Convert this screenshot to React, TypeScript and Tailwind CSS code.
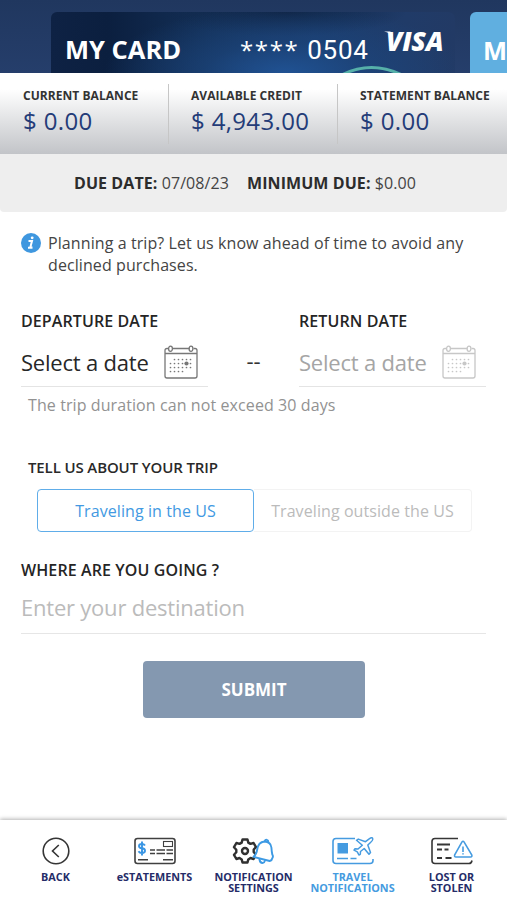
import type { ReactNode } from "react";

function Balance({ label, value, className }: { label: string; value: string; className: string }) {
  return (
    <div className={`h-[60px] shrink-0 whitespace-nowrap ${className}`}>
      <div className="pt-[3px] text-[12px] leading-[18px] font-bold tracking-[0.050px] text-[#333]">{label}</div>
      <div className="text-[24px] leading-[32px] tracking-[0.350px] text-[#243c78]">{value}</div>
    </div>
  );
}

const rows = [
  { y: 14.5, xs: [10, 14, 18, 22, 26] },
  { y: 18.5, xs: [6, 10, 14, 18, 22, 26] },
  { y: 22.5, xs: [6, 10, 14, 18, 22, 26] },
  { y: 26.5, xs: [6, 10, 14, 18] },
];

function CalendarIcon({ color }: { color: string }) {
  return (
    <svg className="mb-[2px]" width="34" height="34" viewBox="0 0 34 34" fill="none" stroke={color} strokeWidth="1.3">
      <path d="M4.500 3.500H3Q1 3.500 1 5.500V31Q1 33 3 33H31Q33 33 33 31V5.500Q33 3.500 31 3.500H29.500M8.500 3.500H25.500M1 8.500H33" />
      <ellipse cx="6.500" cy="3.700" rx="1.900" ry="2.600" />
      <ellipse cx="27" cy="3.700" rx="1.900" ry="2.600" />
      {rows.map((r) => r.xs.map((x) => <circle key={`${x}-${r.y}`} cx={x + 0.5} cy={r.y} r="0.85" fill={color} stroke="none" />))}
      <circle cx="22.500" cy="18.500" r="2.100" fill={color} stroke="none" />
    </svg>
  );
}

function DateField({ label, color, text }: { label: string; color: string; text: string }) {
  return (
    <div className="w-[187px]">
      <div className="text-[16px] leading-[22px] font-semibold tracking-[0.100px] text-[#252525]">{label}</div>
      <div className="mt-[7px] flex h-[48px] items-center justify-between border-b border-[#e4e4e4] pr-[10px]">
        <span className={`pb-[2px] text-[22px] leading-[30px] tracking-[-0.200px] whitespace-nowrap ${text}`}>Select a date</span>
        <CalendarIcon color={color} />
      </div>
    </div>
  );
}

function NavItem({ icon, lines, className = "text-[#252c68]" }: { icon: ReactNode; lines: string[]; className?: string }) {
  return (
    <div className={`flex w-[99px] shrink-0 flex-col items-center ${className}`}>
      <div className="flex h-[30px] items-center">{icon}</div>
      <div className="mt-[5px] text-center text-[10.800px] leading-[11px] font-bold whitespace-nowrap">
        {lines.map((l) => (
          <div key={l}>{l}</div>
        ))}
      </div>
    </div>
  );
}

function BackIcon() {
  return (
    <svg width="28" height="28" viewBox="0 0 28 28" fill="none" stroke="#353535" strokeWidth="1.600">
      <circle cx="14" cy="14" r="12.800" />
      <path d="M16.800 8L10.500 14L16.800 20" />
    </svg>
  );
}

function StatementIcon() {
  return (
    <svg width="42" height="28" viewBox="0 0 42 28" fill="none" stroke="#404040" strokeWidth="1.600">
      <rect x="1" y="1.500" width="40" height="25" rx="2.500" />
      <rect x="29.500" y="4.500" width="9" height="5" strokeWidth="1.100" />
      <path d="M16 13H21M22.500 13H31M32.500 13H39M16 16.500H21M22.500 16.500H31M32.500 16.500H39M4 22.800H14M29 22.800H39" />
      <path d="M11 8.500Q10 7 7.800 7Q5 7 5 9Q5 11 8 11.300Q11 11.600 11 13.800Q11 16 8 16Q5.500 16 4.500 14.300M8 4.500V18.500" stroke="#3995e3" strokeWidth="1.900" />
    </svg>
  );
}

function SettingsIcon() {
  return (
    <svg className="mr-[2px]" width="42" height="28" viewBox="0 0 42 28" fill="none" strokeLinejoin="round" strokeLinecap="round">
      <path d="M10.500 2.500H15.500L16.300 5.600L18.500 6.900L21.600 6L24 10.200L21.700 12.500V15L24 17.800L21.600 22L18.500 21L16.300 22.400L15.500 25.500H10.500L9.700 22.400L7.500 21L4.400 22L2 17.800L4.300 15.300V12.700L2 10.200L4.400 6L7.500 6.900L9.700 5.600Z" stroke="#303030" strokeWidth="2.400" />
      <circle cx="13" cy="14" r="3" stroke="#303030" strokeWidth="2.400" />
      <path d="M21.500 19.800Q24.500 17.500 25.200 12.500Q26.200 5.200 32.500 4.500Q38.800 4.800 39.400 10.500Q39.700 15 40.300 17.500Q41.500 19.500 40.400 21Q40 23.500 37.700 24Z" fill="#fff" stroke="#3d9ae4" strokeWidth="1.900" />
      <path d="M32.800 4A1.800 1.800 0 0 1 36.300 4.700M27.500 22.500Q28 26 30.500 26Q32.500 25.800 33 23.600" stroke="#3d9ae4" strokeWidth="1.900" />
    </svg>
  );
}

function TravelIcon() {
  return (
    <svg width="42" height="28" viewBox="0 0 42 28" fill="none" stroke="#459be0" strokeWidth="1.600">
      <path d="M23 1.500H4Q1 1.500 1 4.500V23.500Q1 26.500 4 26.500H38Q41 26.500 41 23.500V22" />
      <rect x="5.500" y="6" width="10.500" height="10.500" fill="#459be0" stroke="none" />
      <path d="M5 21.500H16M18.500 21.500H24.500" />
      <path d="M24.500 3.300L26.300 2.100L33.500 4.700L37.200 1.900Q40.200 0 40.700 1.500Q41.400 3 38.500 5.500L35.800 8L38.500 15.500L37 17.300L32.200 11.500L28.500 14.500L28.300 17.300L26.900 18L25.300 14.800L22 13.200L23 11.800L26 12L30.300 8.200Z" strokeWidth="1.500" strokeLinejoin="round" />
    </svg>
  );
}

function LostIcon() {
  return (
    <svg width="42" height="28" viewBox="0 0 42 28" fill="none" stroke="#363636" strokeWidth="1.600">
      <path d="M27 1.500H4Q1 1.500 1 4.500V23.500Q1 26.500 4 26.500H38Q40.500 26.500 41 23.500" />
      <path d="M6 7.500H19M6 12.500H11M13.500 12.500H17.500M6 21H11M14.500 21H20.500" strokeWidth="2.100" />
      <path d="M31 4.900Q32 3.500 33 4.900L40.700 17.800Q41.500 19.800 39.500 20H25Q23 19.800 23.700 17.800Z" stroke="#459be0" fill="#fff" />
      <path d="M32 9.500V15M32 16.300V17.500" stroke="#459be0" />
    </svg>
  );
}

export default function App() {
  return (
    <div className="flex h-[900px] w-[507px] flex-col overflow-hidden bg-white font-['Open_Sans',sans-serif]">
      <header className="flex h-[73px] shrink-0 gap-[15px] overflow-hidden bg-linear-to-b from-[#20375f] to-[#253e6b] pt-[12px] pl-[51px]">
        <div className="relative flex h-[61px] w-[404px] shrink-0 overflow-hidden rounded-t-[6px] bg-[radial-gradient(ellipse_45%_110%_at_58%_100%,#205293_0%,#1d488199_45%,transparent_100%),radial-gradient(ellipse_30%_40%_at_58%_0%,#0f2444_0%,transparent_100%),linear-gradient(90deg,#0e2244_0%,#0b1f3f_14%,#132f56_38%,#1a3a69_65%,#203b68_88%,#223a65_100%)] pl-[14px] text-white">
          <span className="mt-[20px] w-[175px] text-[25.500px] leading-[34px] font-bold whitespace-nowrap">MY CARD</span>
          <span className="mt-[21px] flex w-[143px] gap-[8px] leading-[34px] whitespace-nowrap">
            <span className="text-[24px] tracking-[1.600px]">****</span>
            <span className="font-['Roboto',sans-serif] text-[26px] tracking-[0.700px]">0504</span>
          </span>
          <span className="relative mt-[11px] ml-[3px] text-[26.500px] leading-[36px] font-extrabold tracking-[-0.200px] italic">
            VISA
            <svg className="absolute top-[8px] left-[-2px]" width="9" height="5" viewBox="0 0 9 5">
              <path d="M0 .5H6Q8 1 9 5Q6 1.500 0 .5Z" fill="#fff" />
            </svg>
          </span>
          <svg className="absolute top-[53px] left-[289px]" width="66" height="9" viewBox="0 0 66 9" fill="none">
            <path d="M-2 12Q31 -7 66 12" stroke="#56b0a9" strokeWidth="3" />
          </svg>
        </div>
        <div className="h-[61px] w-[60px] shrink-0 rounded-tl-[6px] bg-[#60afe0] pt-[21px] pl-[13px] text-[25.500px] leading-[34px] font-bold text-white">M</div>
      </header>
      <section className="flex h-[81px] shrink-0 bg-linear-to-b from-white from-20% to-[#c2c4c8] pt-[11px] pl-[23px]">
        <Balance label="CURRENT BALANCE" value="$ 0.00" className="w-[146px] border-r border-[#c6c6c6]" />
        <Balance label="AVAILABLE CREDIT" value="$ 4,943.00" className="w-[169px] border-r border-[#c6c6c6] pl-[22px]" />
        <Balance label="STATEMENT BALANCE" value="$ 0.00" className="pl-[22px]" />
      </section>
      <section className="flex h-[58px] shrink-0 items-center rounded-b-[4px] bg-[#eeeeee] pl-[74px] text-[16px] tracking-[0.080px] whitespace-nowrap text-[#444]">
        <span className="w-[173px]"><b className="text-[#2c2c2c]">DUE DATE:</b> 07/08/23</span>
        <span><b className="text-[#2c2c2c]">MINIMUM DUE:</b> $0.00</span>
      </section>
      <main className="flex flex-1 flex-col px-[21px]">
        <div className="mt-[20px] flex h-[44px] gap-[7px] text-[16px] leading-[22px] tracking-[0.090px] text-[#444]">
          <svg width="20" height="20" className="mt-px" viewBox="0 0 20 20">
            <circle cx="10" cy="10" r="10" fill="#3f97df" />
            <path d="M7.500 8H11L9.300 14.500H11.500M7 14.800H11.500" fill="none" stroke="#fff" strokeWidth="2" />
            <circle cx="11.200" cy="4.800" r="1.400" fill="#fff" />
          </svg>
          <p className="whitespace-nowrap">Planning a trip? Let us know ahead of time to avoid any<br />declined purchases.</p>
        </div>
        <div className="mt-[34px] flex justify-between">
          <DateField label="DEPARTURE DATE" color="#777777" text="text-[#272727]" />
          <span className="mt-[35px] text-[22px] leading-[30px] text-[#333]">--</span>
          <DateField label="RETURN DATE" color="#c7c7c7" text="text-[#a5a5a5]" />
        </div>
        <p className="mt-[7px] pl-[7px] text-[16px] leading-[22px] tracking-[0.090px] text-[#929292]">The trip duration can not exceed 30 days</p>
        <h2 className="mt-[40px] pl-[7px] text-[15px] leading-[22px] font-semibold tracking-[-0.120px] text-[#292929]">TELL US ABOUT YOUR TRIP</h2>
        <div className="mt-[11px] flex h-[43px] pl-[16px] text-[16px] tracking-[0.080px] whitespace-nowrap">
          <button className="h-[43px] w-[217px] rounded-[4px] border-[1.500px] border-[#60ade9] text-[#4299e2]">Traveling in the US</button>
          <button className="h-[43px] w-[218px] rounded-r-[4px] border border-l-0 border-[#f3f3f3] text-[#bbbbbb]">Traveling outside the US</button>
        </div>
        <h2 className="mt-[27px] text-[16px] leading-[22px] font-semibold tracking-[0.100px] text-[#252525]">WHERE ARE YOU GOING ?</h2>
        <div className="mt-[6px] h-[47px] border-b border-[#e6e6e6] pt-[5px] text-[22px] leading-[30px] tracking-[-0.220px] text-[#bbbbbb]">Enter your destination</div>
        <button className="mt-[27px] ml-px h-[57px] w-[222px] self-center rounded-[4px] bg-[#8498b0] text-[17px] font-bold text-white">SUBMIT</button>
      </main>
      <nav className="flex h-[80px] shrink-0 bg-white pt-[16px] pl-[6px] shadow-[0_-1px_4px_rgba(0,0,0,0.3)]">
        <NavItem icon={<BackIcon />} lines={["BACK"]} />
        <NavItem icon={<StatementIcon />} lines={["eSTATEMENTS"]} />
        <NavItem icon={<SettingsIcon />} lines={["NOTIFICATION", "SETTINGS"]} />
        <NavItem icon={<TravelIcon />} lines={["TRAVEL", "NOTIFICATIONS"]} className="text-[#459be0]" />
        <NavItem icon={<LostIcon />} lines={["LOST OR", "STOLEN"]} />
      </nav>
    </div>
  );
}
